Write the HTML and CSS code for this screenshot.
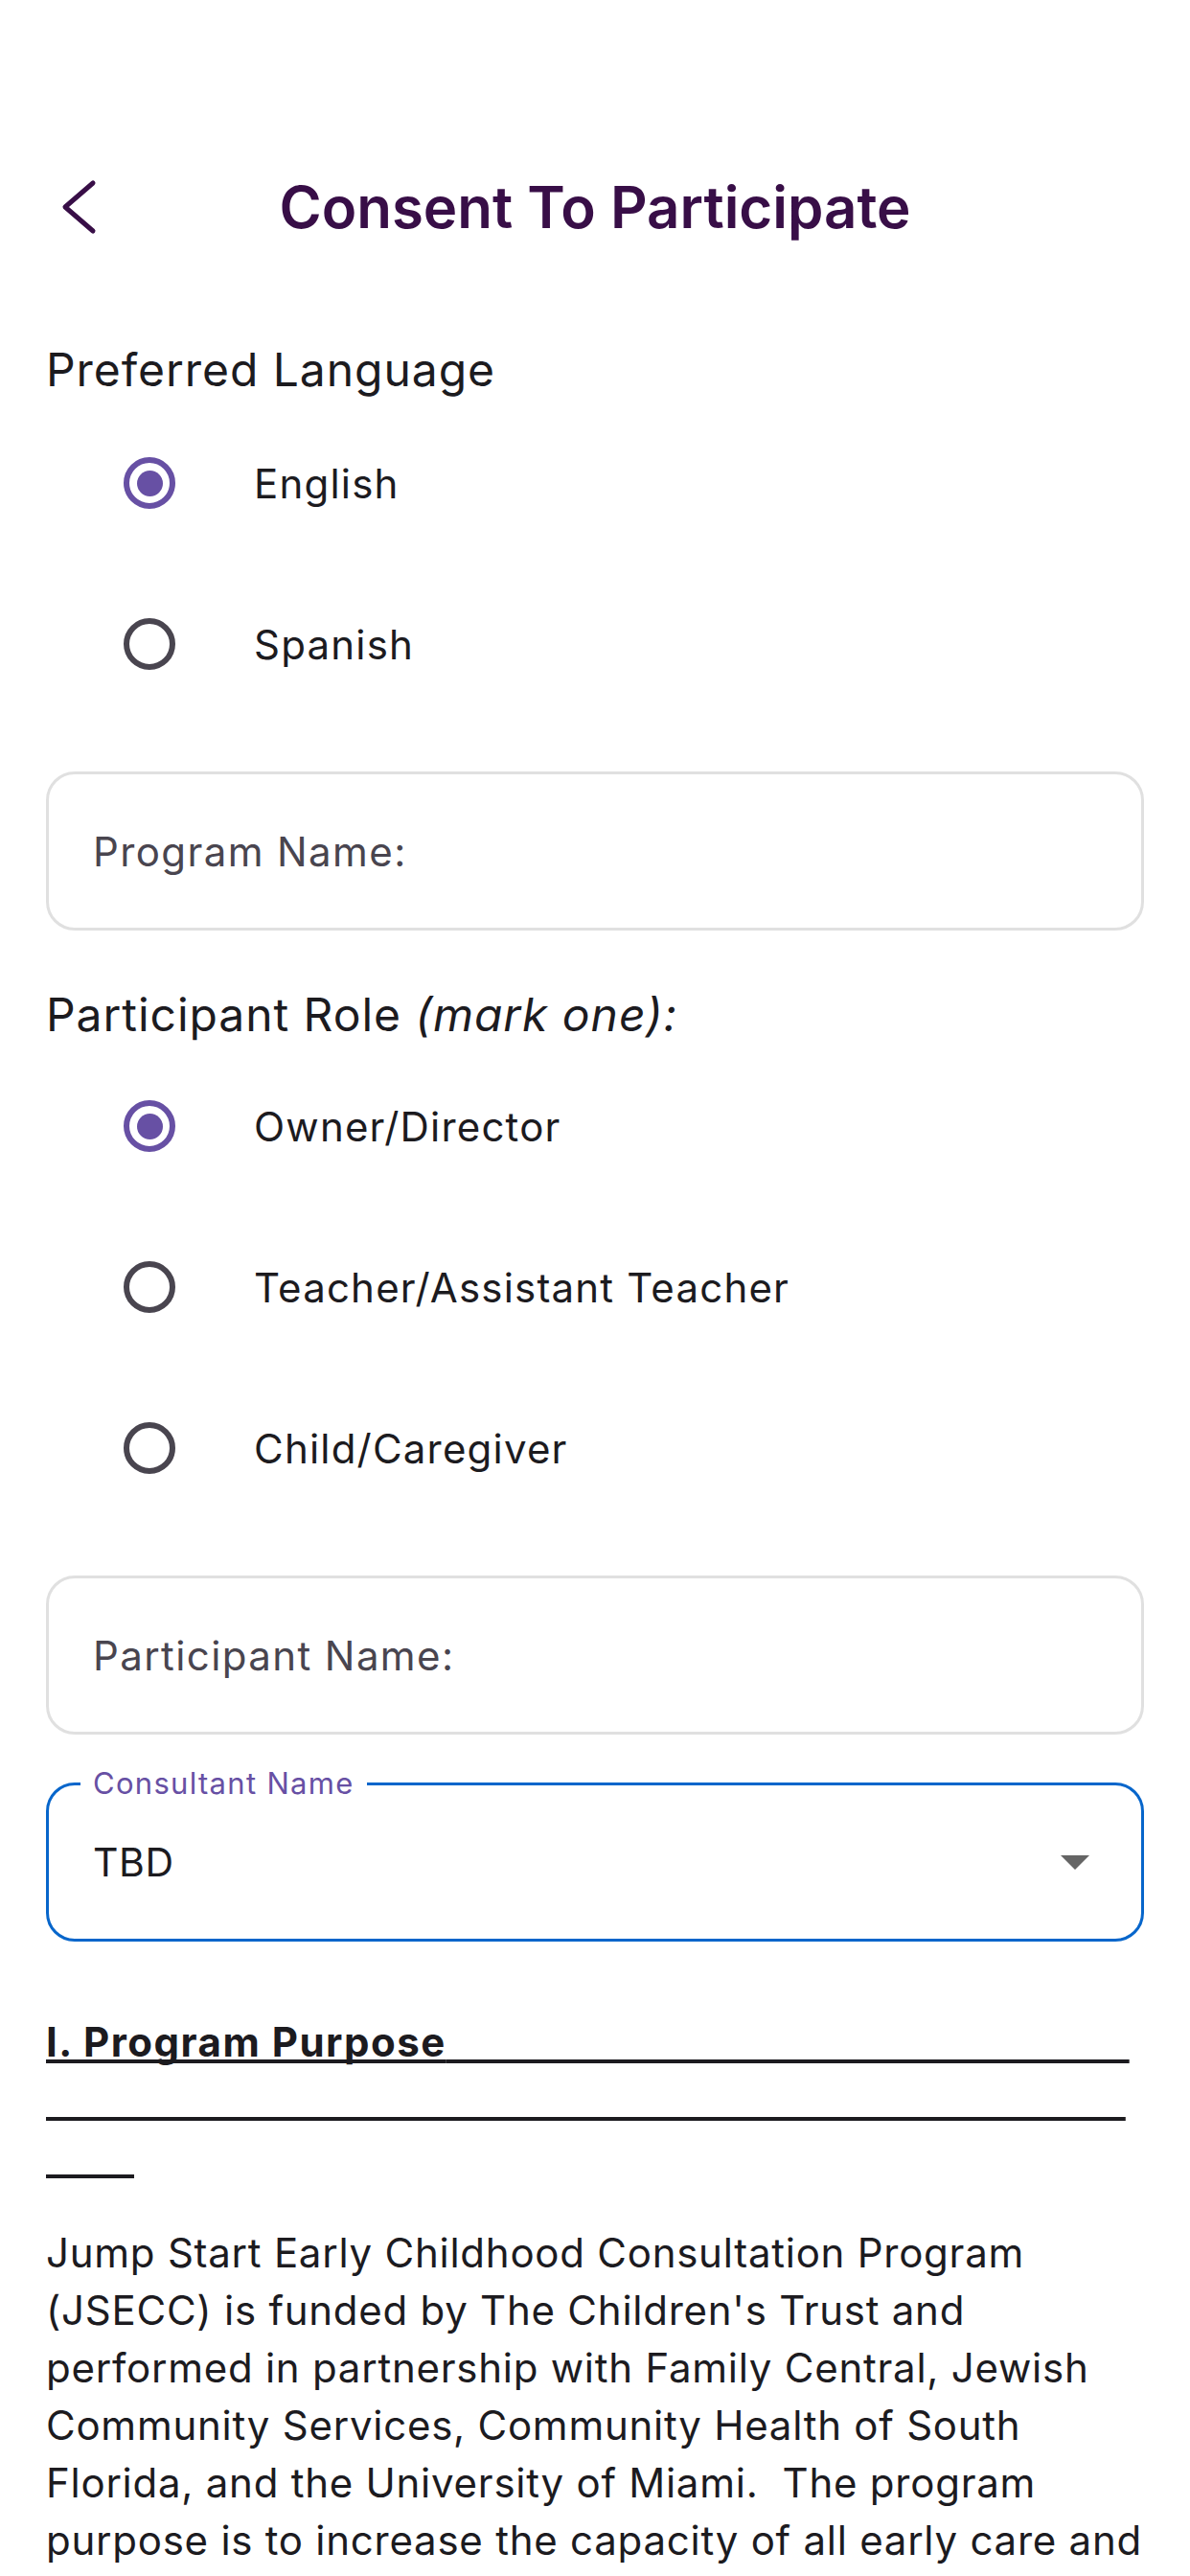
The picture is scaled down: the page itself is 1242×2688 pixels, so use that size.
FILE: index.html
```html
<!DOCTYPE html>
<html lang="en">
<head>
  <meta charset="UTF-8" />
  <meta name="viewport" content="width=device-width, initial-scale=1" />
  <title>Consent To Participate</title>
  <link rel="stylesheet" href="styles.css">
</head>
<body>
  <div class="screen">
    <header class="app-bar">
      <button class="back-btn" aria-label="Back">
        <svg width="40" height="64" viewBox="0 0 40 64">
          <polyline points="34,7 5,32 34,57" fill="none" stroke="#380e47" stroke-width="5" stroke-linecap="round" stroke-linejoin="round" />
        </svg>
      </button>
      <h1>Consent To Participate</h1>
      <span></span>
    </header>

    <main class="form">
      <p class="group-label">Preferred Language</p>
      <div class="radio-group">
        <label class="radio-row">
          <input type="radio" name="language" checked>
          <span>English</span>
        </label>
        <label class="radio-row">
          <input type="radio" name="language">
          <span>Spanish</span>
        </label>
      </div>

      <div class="text-field">Program Name:</div>

      <p class="group-label role-label">Participant Role <em>(mark one):</em></p>
      <div class="radio-group">
        <label class="radio-row">
          <input type="radio" name="role" checked>
          <span>Owner/Director</span>
        </label>
        <label class="radio-row">
          <input type="radio" name="role">
          <span>Teacher/Assistant Teacher</span>
        </label>
        <label class="radio-row">
          <input type="radio" name="role">
          <span>Child/Caregiver</span>
        </label>
      </div>

      <div class="text-field">Participant Name:</div>

      <div class="dropdown">
        <span class="dropdown-label">Consultant Name</span>
        <span class="dropdown-value">TBD</span>
        <svg class="dropdown-arrow" width="30" height="15" viewBox="0 0 30 15">
          <polygon points="0,0 30,0 15,15" fill="#656565" />
        </svg>
      </div>

      <p class="section-title"><span class="title-text">I. Program Purpose</span><span class="title-rule">____________________________________________________________________________________</span></p>

      <p class="body-text">
        Jump Start Early Childhood Consultation Program (JSECC) is funded by The Children's Trust and performed in partnership with Family Central, Jewish Community Services, Community Health of South Florida, and the University of Miami.&nbsp; The program purpose is to increase the capacity of all early care and education programs to support the social, emotional and behavioral development of young children.
      </p>
    </main>
  </div>
</body>
</html>
```

FILE: styles.css
```css
body {
  margin: 0;
  background: #ffffff;
  font-family: Inter, "Noto Sans", sans-serif;
  color: #1c1b1f;
}
.screen {
  width: 1242px;
}
.app-bar {
  display: grid;
  grid-template-columns: 1fr auto 1fr;
  align-items: center;
  height: 168px;
  margin-top: 132px;
}
.back-btn {
  justify-self: start;
  margin-left: 63px;
  padding: 0;
  border: none;
  background: none;
  display: flex;
}
.app-bar h1 {
  margin: 0;
  font-size: 60px;
  font-weight: 600;
  line-height: 72px;
  color: #380e47;
}
.form {
  padding: 0 48px;
}
.group-label {
  margin: 54px 0 2px;
  font-size: 48px;
  line-height: 64px;
  letter-spacing: 0.95px;
}
.group-label em {
  font-style: italic;
}
.role-label {
  margin-top: 56px;
  margin-bottom: 0;
}
.radio-row {
  display: flex;
  align-items: center;
  height: 168px;
  padding-left: 81px;
  gap: 82px;
  font-size: 42px;
  letter-spacing: 1.2px;
}
.radio-row input {
  appearance: none;
  margin: 0;
  width: 54px;
  height: 54px;
  border: 6px solid #49454f;
  border-radius: 50%;
  display: flex;
  align-items: center;
  justify-content: center;
  flex-shrink: 0;
}
.radio-row input:checked {
  border-color: #6750a4;
}
.radio-row input:checked::after {
  content: "";
  width: 27px;
  height: 27px;
  border-radius: 50%;
  background: #6750a4;
}
.text-field {
  box-sizing: border-box;
  height: 166px;
  margin-top: 49px;
  padding-left: 46px;
  display: flex;
  align-items: center;
  border: 3px solid #e0e0e0;
  border-radius: 30px;
  font-size: 42px;
  letter-spacing: 1.4px;
  color: #49454f;
}
.dropdown {
  position: relative;
  box-sizing: border-box;
  height: 166px;
  margin-top: 50px;
  padding: 0 54px 0 46px;
  display: flex;
  align-items: center;
  justify-content: space-between;
  border: 3px solid #0766cb;
  border-radius: 30px;
}
.dropdown-label {
  position: absolute;
  top: -22px;
  left: 33px;
  padding: 0 13px;
  background: #ffffff;
  font-size: 31px;
  line-height: 40px;
  letter-spacing: 1.3px;
  color: #6750a4;
}
.dropdown-value {
  font-size: 41px;
  letter-spacing: 0.6px;
}
.section-title {
  margin: 75px 0 0;
  font-size: 42px;
  font-weight: 700;
  line-height: 60px;
  letter-spacing: 1.5px;
  text-decoration: underline;
  text-decoration-color: #1c1b1f;
  text-decoration-thickness: 4px;
  text-decoration-skip-ink: none;
  text-underline-offset: 3px;
}
/* the underscores only push the underline across the lines */
.title-rule {
  word-break: break-all;
  letter-spacing: 3px;
  color: transparent;
}
.body-text {
  margin: 40px 0 0;
  font-size: 42px;
  line-height: 60px;
  letter-spacing: 0.75px;
}
```
